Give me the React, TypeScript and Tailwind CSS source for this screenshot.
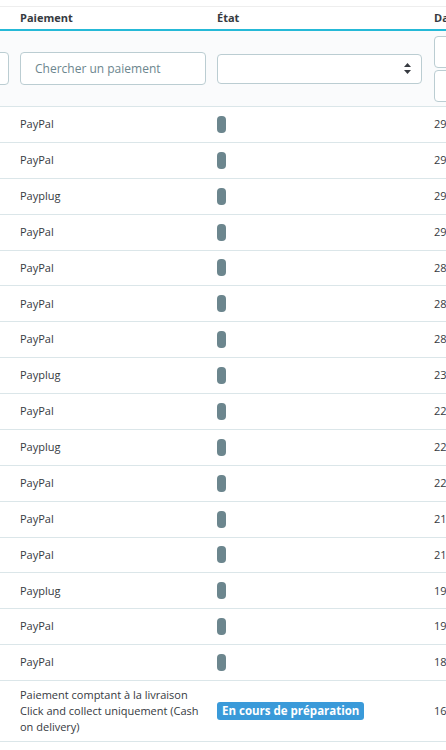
import React from 'react';

const rows: { pay: string; date: string }[] = [
  { pay: 'PayPal', date: '29/04/2021 18:12:04' },
  { pay: 'PayPal', date: '29/04/2021 11:40:52' },
  { pay: 'Payplug', date: '29/04/2021 09:03:11' },
  { pay: 'PayPal', date: '29/04/2021 08:21:37' },
  { pay: 'PayPal', date: '28/04/2021 20:15:09' },
  { pay: 'PayPal', date: '28/04/2021 16:48:22' },
  { pay: 'PayPal', date: '28/04/2021 10:02:45' },
  { pay: 'Payplug', date: '23/04/2021 14:30:18' },
  { pay: 'PayPal', date: '22/04/2021 19:55:03' },
  { pay: 'Payplug', date: '22/04/2021 12:11:40' },
  { pay: 'PayPal', date: '22/04/2021 09:27:56' },
  { pay: 'PayPal', date: '21/04/2021 17:44:31' },
  { pay: 'PayPal', date: '21/04/2021 08:09:14' },
  { pay: 'Payplug', date: '19/04/2021 21:36:02' },
  { pay: 'PayPal', date: '19/04/2021 15:18:47' },
  { pay: 'PayPal', date: '18/04/2021 11:05:29' },
];

const font = { fontFamily: '"Open Sans", "Noto Sans", sans-serif' };

export default function App() {
  return (
    <div className="w-[446px] overflow-hidden bg-white text-[11px] text-[#363a41]" style={font}>
      <div className="pt-[6px]">
        {/* header */}
        <div className="flex h-[25px] items-center border-t border-[#eeeeee] border-b-2 border-b-[#25b9d7] font-bold">
          <div className="w-[20px] shrink-0" />
          <div className="w-[197px] shrink-0">Paiement</div>
          <div className="w-[217px] shrink-0">État</div>
          <div className="shrink-0 whitespace-nowrap">Date</div>
        </div>

        {/* filters */}
        <div className="flex h-[76px] items-center border-b border-[#dbe6e9] bg-[#fafbfc]">
          <div className="flex w-[20px] shrink-0 justify-end overflow-hidden pr-[11px]">
            <div className="h-[33px] w-[60px] shrink-0 rounded-[4px] border border-[#bbcdd2] bg-white" />
          </div>
          <div className="w-[197px] shrink-0 pr-[11px]">
            <div className="flex h-[33px] items-center rounded-[4px] border border-[#bbcdd2] bg-white px-[14px] text-[12px] text-[#6c868e]">
              Chercher un paiement
            </div>
          </div>
          <div className="w-[217px] shrink-0 pr-[12px]">
            <div className="flex h-[30px] items-center justify-end rounded-[4px] border border-[#bbcdd2] bg-white pr-[10px]">
              <svg width="7" height="11" viewBox="0 0 7 11" fill="#363a41">
                <path d="M3.5 0 L7 4 H0 Z" />
                <path d="M3.5 11 L7 7 H0 Z" />
              </svg>
            </div>
          </div>
          <div className="flex shrink-0 flex-col gap-[2px]">
            <div className="h-[32px] w-[80px] rounded-[4px] border border-[#bbcdd2] bg-white" />
            <div className="h-[32px] w-[80px] rounded-[4px] border border-[#bbcdd2] bg-white" />
          </div>
        </div>

        {/* rows */}
        {rows.map((r, i) => (
          <div key={i} className="box-border flex h-[35.875px] items-center border-b border-[#dbe6e9]">
            <div className="w-[20px] shrink-0" />
            <div className="w-[197px] shrink-0">{r.pay}</div>
            <div className="w-[217px] shrink-0">
              <span className="block h-[17px] w-[9px] rounded-[4px] bg-[#6c868e]" />
            </div>
            <div className="shrink-0 whitespace-nowrap">{r.date}</div>
          </div>
        ))}

        <div className="flex h-[61px] items-center border-b border-[#dbe6e9]">
          <div className="w-[20px] shrink-0" />
          <div className="w-[197px] shrink-0 pr-[8px] leading-[16px]">
            Paiement comptant à la livraison Click and collect uniquement (Cash on delivery)
          </div>
          <div className="w-[217px] shrink-0">
            <span className="inline-block rounded-[3px] bg-[#3a9ad9] px-[5px] text-[11.5px] font-bold leading-[18px] text-white">
              En cours de préparation
            </span>
          </div>
          <div className="shrink-0 whitespace-nowrap">16/04/2021 10:22:51</div>
        </div>
      </div>
    </div>
  );
}
